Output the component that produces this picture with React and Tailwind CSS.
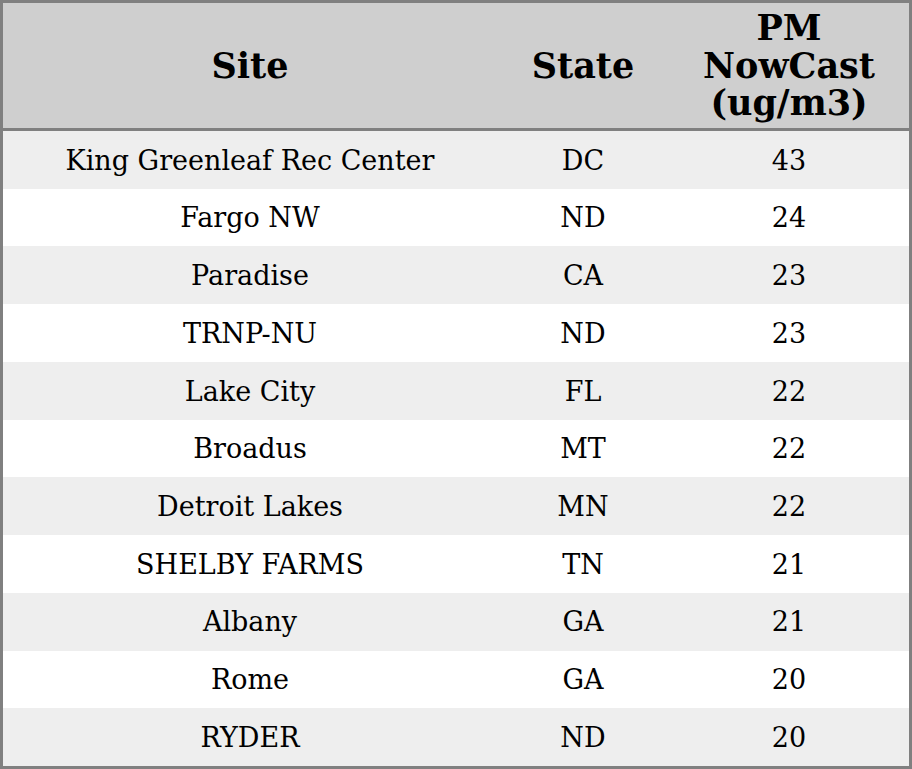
import React from "react";

const rows = [
  ["King Greenleaf Rec Center", "DC", "43"],
  ["Fargo NW", "ND", "24"],
  ["Paradise", "CA", "23"],
  ["TRNP-NU", "ND", "23"],
  ["Lake City", "FL", "22"],
  ["Broadus", "MT", "22"],
  ["Detroit Lakes", "MN", "22"],
  ["SHELBY FARMS", "TN", "21"],
  ["Albany", "GA", "21"],
  ["Rome", "GA", "20"],
  ["RYDER", "ND", "20"],
];

export default function App() {
  return (
    <div
      className="w-[912px] h-[769px] border-[3px] border-[#808080] bg-white text-black flex flex-col"
      style={{ fontFamily: '"DejaVu Serif", serif' }}
    >
      <div className="h-[125px] bg-[#cfcfcf] border-b-[3px] border-[#808080] grid grid-cols-[494px_172px_240px] items-center box-content font-bold text-[35px] leading-[37.5px] text-center">
        <div>Site</div>
        <div>State</div>
        <div>
          PM
          <br />
          NowCast
          <br />
          (ug/m3)
        </div>
      </div>
      <div className="flex-1 flex flex-col">
        {rows.map((r, i) => (
          <div
            key={i}
            className={`flex-1 grid grid-cols-[494px_172px_240px] items-center text-center text-[27px] ${
              i % 2 === 0 ? "bg-[#eeeeee]" : "bg-white"
            }`}
          >
            <div className="pt-[2px]">{r[0]}</div>
            <div className="pt-[2px]">{r[1]}</div>
            <div className="pt-[2px]">{r[2]}</div>
          </div>
        ))}
      </div>
    </div>
  );
}
